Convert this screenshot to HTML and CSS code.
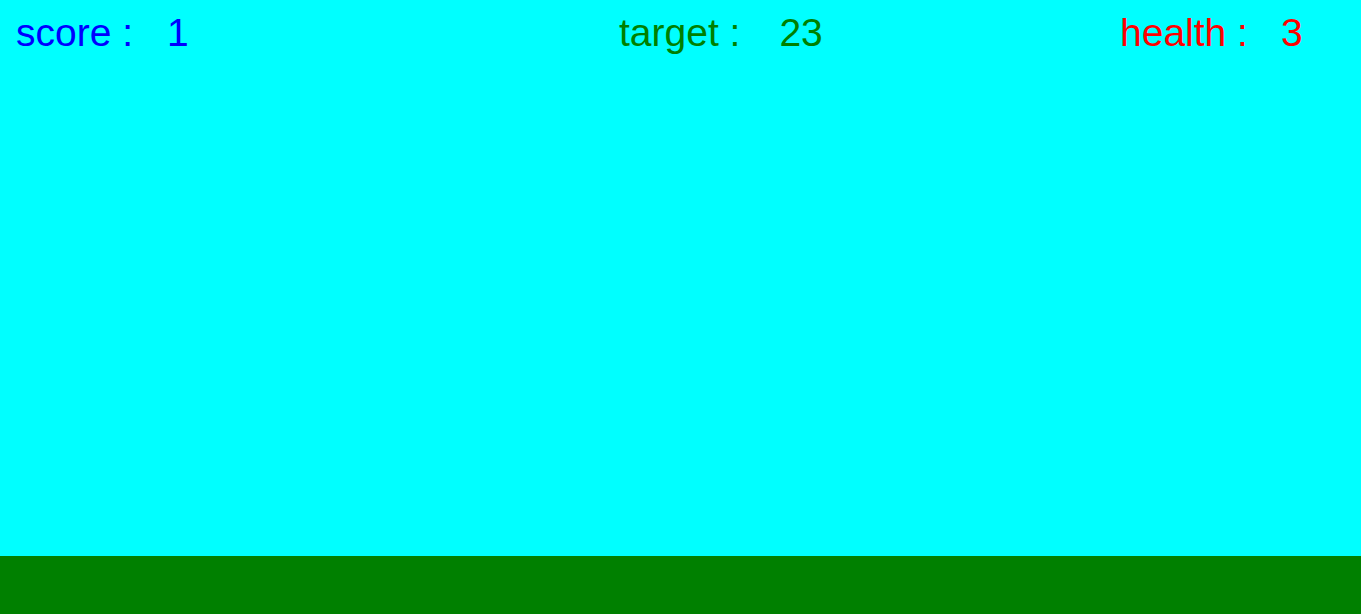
FILE: index.html
```html
<!DOCTYPE html>
<html>
<head>
<meta charset="utf-8">
<link rel="stylesheet" href="styles.css">
</head>
<body>
<div class="game">
  <div class="hud">
    <div class="stat score"><span class="label">score :</span><span class="value">1</span></div>
    <div class="stat target"><span class="label">target :</span><span class="value">23</span></div>
    <div class="stat health"><span class="label">health :</span><span class="value">3</span></div>
  </div>
  <div class="sky"></div>
  <div class="ground"></div>
</div>
</body>
</html>
```
FILE: styles.css
```css
html, body {
  margin: 0;
  padding: 0;
}
body {
  width: 1361px;
  height: 614px;
  overflow: hidden;
  background: #00ffff;
}
.game {
  display: flex;
  flex-direction: column;
  height: 614px;
}
.hud {
  display: flex;
  padding: 10px 0 0 16px;
  font-family: "Liberation Sans", Arial, sans-serif;
  font-size: 39px;
  line-height: 45px;
  white-space: pre;
}
.stat {
  display: flex;
}
.score {
  color: #0000ff;
  width: 603px;
}
.score .value {
  margin-left: 34px;
}
.target {
  color: #008000;
  width: 501px;
}
.target .value {
  margin-left: 39px;
}
.health {
  color: #ff0000;
}
.health .value {
  margin-left: 33px;
}
.sky {
  flex: 1;
}
.ground {
  height: 58px;
  background: #008000;
}
```
